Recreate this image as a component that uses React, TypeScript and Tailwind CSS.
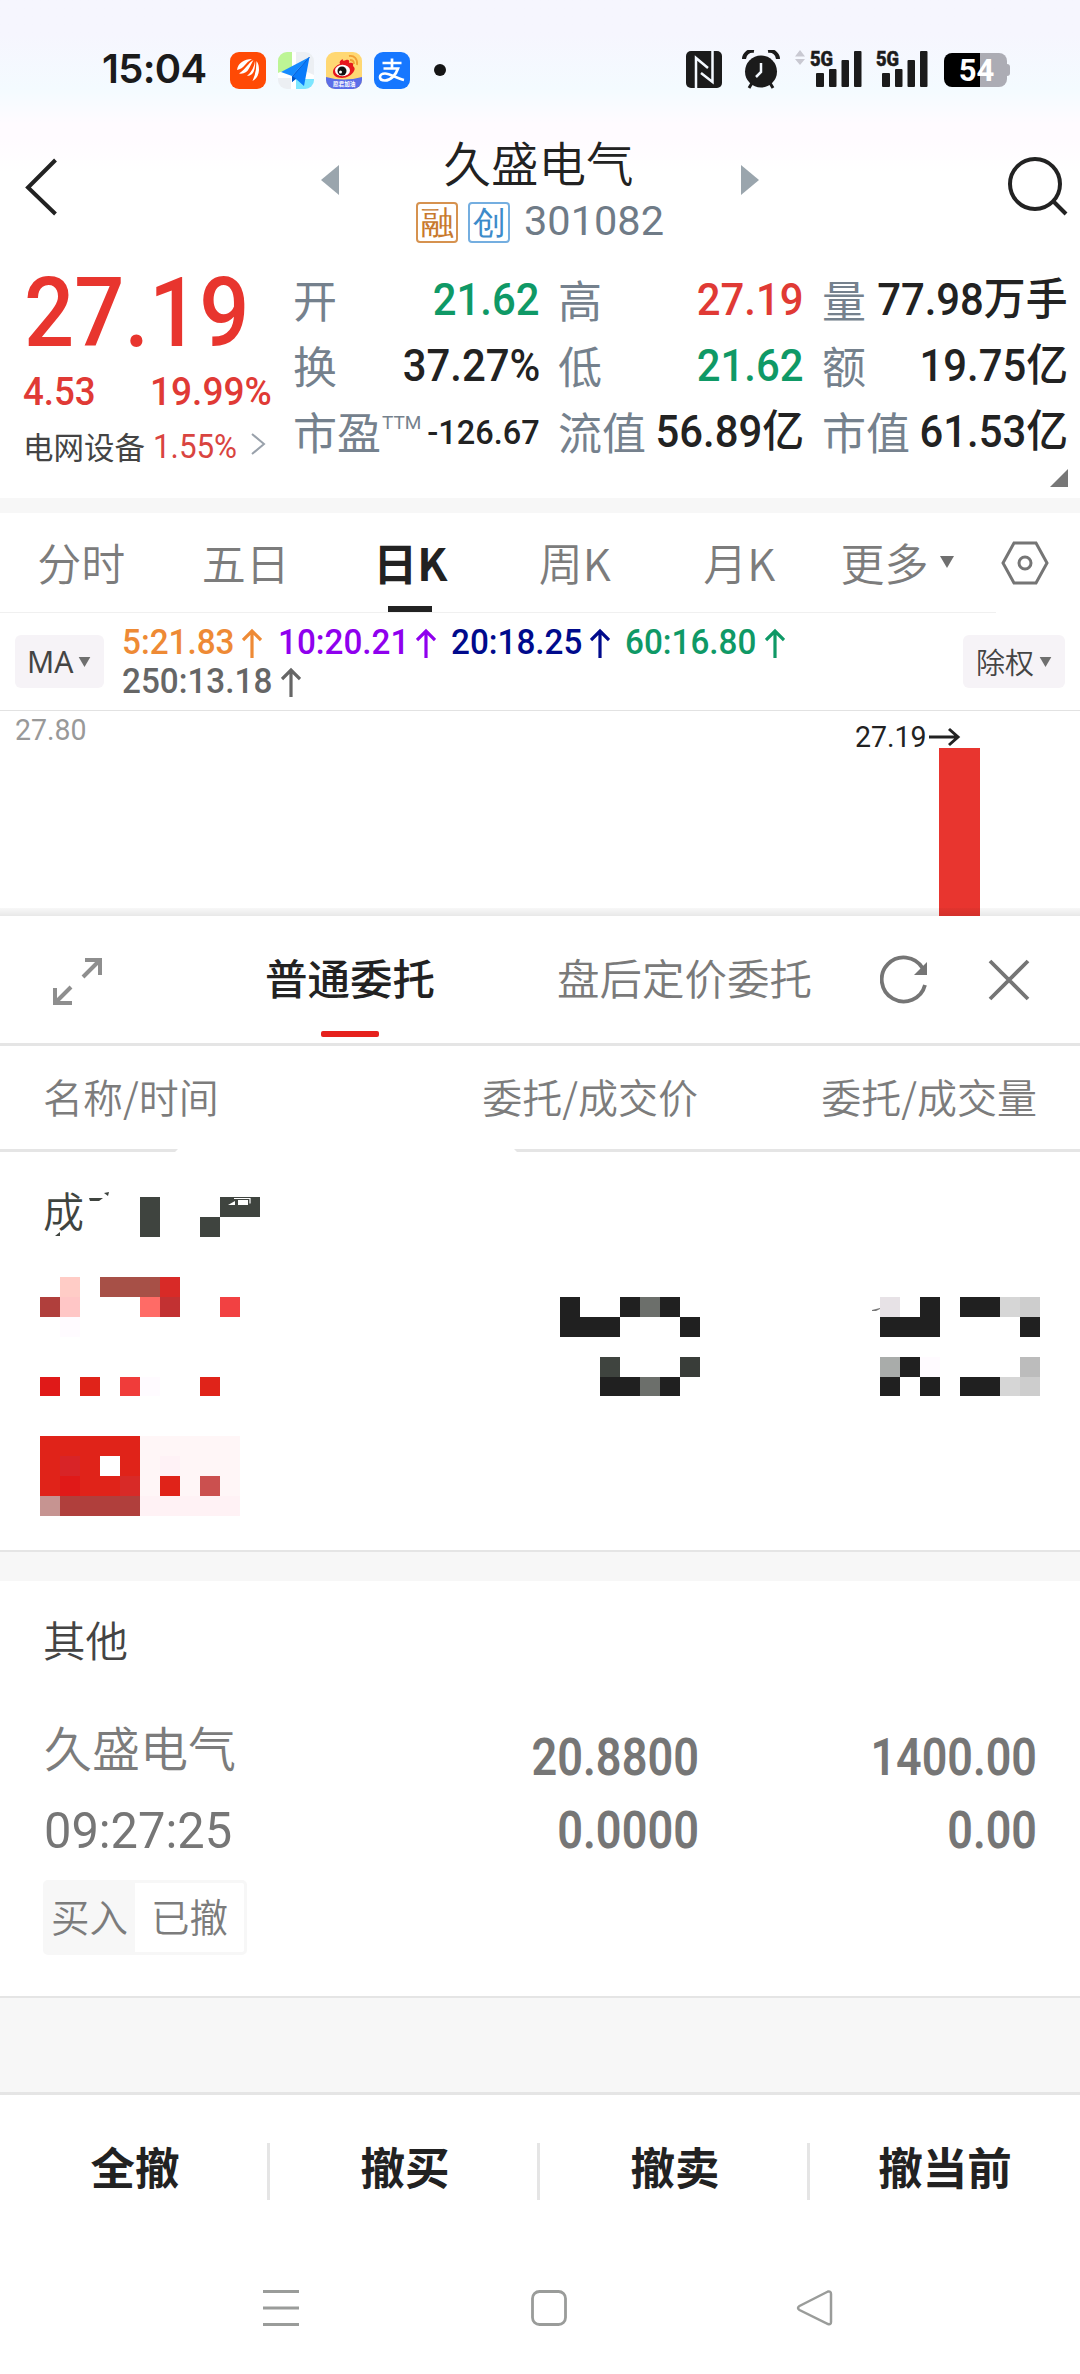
import React from "react";

const CJK = "font-['Noto_Sans_CJK_SC',sans-serif]";
const NUM = "font-[Roboto,'Noto_Sans_CJK_SC',sans-serif]";

type Cell = [number, number, number, number, string];

/* ---------- status bar ---------- */

function Signal() {
  return (
    <svg width="52" height="46" viewBox="0 -8 52 46" className="-mt-[8px] shrink-0 overflow-visible">
      <text x="0" y="16" fontFamily="Roboto, sans-serif" fontWeight="800" fontSize="21" textLength="23" lengthAdjust="spacingAndGlyphs" fill="#1b1b1b" stroke="#1b1b1b" strokeWidth="0.600">5G</text>
      <g fill="#1b1b1b">
        <rect x="6" y="23" width="8" height="14" rx="1" />
        <rect x="19" y="19" width="7.500" height="18" rx="1" />
        <rect x="31.500" y="10" width="7.500" height="27" rx="1" />
        <rect x="44" y="1" width="7.500" height="36" rx="1" />
      </g>
    </svg>
  );
}

function StatusBar() {
  return (
    <div className="flex h-[138px] items-start bg-linear-to-b from-[#f6f6fe] from-25% via-[#f4fbff] via-65% to-[#fffbff] to-90% pt-[50px] pl-[102px]">
      <div className="flex h-[38px] w-[128px] items-center font-[Inter,sans-serif] text-[40px] leading-none font-semibold tracking-[-0.7px] text-[#1b1b1b]">15:04</div>
      <div className="mt-[2px] flex h-[37px] items-center gap-[12px]">
        <svg width="36" height="37" viewBox="0 0 36 37">
          <rect width="36" height="37" rx="9" fill="#ff4a05" />
          <g fill="#fff">
            <path d="M22 7C14 7 8 11 7 18q5-1 8-5 2-3 7-6z" />
            <path d="M23.500 8C18 11 17 16 9 21.500q7 1 10-5 2-4 4.500-8.500z" />
            <path d="M25 9q-1 9-8 15 6 0 7.500-7 1-4 .5-8z" />
            <path d="M26.500 9q0 12-4 20 6-3 6.500-11Q29 12 26.500 9z" />
          </g>
        </svg>
        <svg width="36" height="37" viewBox="0 0 36 37">
          <clipPath id="map"><rect width="36" height="37" rx="9" /></clipPath>
          <g clipPath="url(#map)">
            <rect width="36" height="37" fill="#eceff3" />
            <path d="M0 0h14v17L0 21z" fill="#bdf595" />
            <path d="M14 0h4v15l18 8v4H18v10h-5V26L0 26v-5l14-5z" fill="#fff" />
            <path d="M18 27h18v10H18z" fill="#7ce6ff" />
          </g>
          <path d="M31.500 5 3 20l11 4z" fill="#168bff" />
          <path d="M31.500 5 14 24v6l4-3 8 7z" fill="#0a7bfa" />
          <path d="M14 24v6l4-3.500z" fill="#0555c5" />
          <path d="M31.500 5 14 25" stroke="#075fd6" strokeWidth="1" />
        </svg>
        <svg width="36" height="37" viewBox="0 0 36 37">
          <clipPath id="wb"><rect width="36" height="37" rx="9" /></clipPath>
          <g clipPath="url(#wb)">
            <rect width="36" height="37" fill="#ffd873" />
            <path d="M0 25q18 5 36 0v12H0z" fill="#5b6ee8" />
          </g>
          <path d="M14 12c-1-2 0-4 3-5-1 2 1 2 3 1 2-1 4 0 3 3 3-1 5 0 4 3 2 2 2 3 1 5-2 4-7 7-12 7-6 0-9-3-9-6 0-4 4-7 7-8z" fill="#e6161d" />
          <ellipse cx="16.500" cy="18.500" rx="7.500" ry="5.800" fill="#fff" />
          <circle cx="16" cy="19" r="4.500" fill="#111" />
          <circle cx="14.500" cy="20" r="1.500" fill="#fff" />
          <path d="M23 4c5-1 9 3 8 9M24 8c3 0 4 1 4 4" stroke="#f2a035" strokeWidth="1.800" fill="none" />
          <text x="7" y="34" fontFamily="'Noto Sans CJK SC', sans-serif" fontWeight="700" fontSize="5.600" fill="#fff">愿君加油</text>
        </svg>
        <svg width="36" height="37" viewBox="0 0 36 37">
          <rect width="36" height="37" rx="9" fill="#1677ff" />
          <path d="M8.500 11h19M18 6.500v9M9.500 16.500h14.500c-2 6-7 12-13 12-3.500 0-5-1.500-5-3.500s2-3.500 5-3.500c5 0 12 5 19 6.500" stroke="#fff" strokeWidth="2.700" fill="none" />
        </svg>
      </div>
      <div className="mt-[14px] ml-[24px] size-[12px] rounded-full bg-[#151515]" />
      <div className="ml-[240px] flex items-start">
        <svg width="36" height="37" viewBox="0 0 36 37" className="mt-px">
          <rect width="36" height="37" rx="5" fill="#1b1b1b" />
          <path d="M10 37V7l12 10M26.500 0v31L15 22" stroke="#f4f9ff" strokeWidth="2.500" fill="none" />
        </svg>
        <svg width="38" height="39" viewBox="0 0 38 39" className="ml-[20px]">
          <circle cx="19" cy="21.500" r="16" fill="#1b1b1b" />
          <path d="M2 9C2 4 7 0 12 1M36 9C36 4 31 0 26 1" stroke="#1b1b1b" strokeWidth="4" fill="none" />
          <path d="m10 33-3 5M28 33l3 5" stroke="#1b1b1b" strokeWidth="3" />
          <path d="M19 13v9l-5 5" stroke="#f4f9ff" strokeWidth="2.500" fill="none" />
        </svg>
        <svg width="10" height="16" viewBox="0 0 10 16" className="ml-[15px]">
          <path d="m5 0 5 6.500H0zM0 9h10l-5 6z" fill="#c9c9d2" />
        </svg>
        <div className="ml-[5px] flex gap-[14px]">
          <Signal />
          <Signal />
        </div>
        <div className="mt-[3px] ml-[16px] flex items-center">
          <div className="flex h-[34px] w-[63px] items-center justify-center rounded-[8px] bg-linear-to-r from-black from-57% to-[#acacb4] to-57% pl-[2px] font-[Roboto,sans-serif] text-[31px] leading-none font-bold text-white">54</div>
          <div className="h-[12px] w-[3px] rounded-r-[3px] bg-[#acacb4]" />
        </div>
      </div>
    </div>
  );
}

/* ---------- stock header ---------- */

function Badge({ text, className }: { text: string; className: string }) {
  return (
    <span className={`flex h-[41px] w-[42px] items-center justify-center rounded-[4px] border-2 text-[33px] leading-none ${className}`}>
      <span className="-mt-[3px]">{text}</span>
    </span>
  );
}

function TitleBar() {
  return (
    <div className="flex h-[114px] items-start bg-linear-to-b from-[#fffbff] to-white to-30% pl-[25px]">
      <svg width="34" height="60" viewBox="0 0 34 60" className="mt-[19px]">
        <path d="M30.500 3 3 30.500 30.500 57" stroke="#222" strokeWidth="4" fill="none" />
      </svg>
      <div className="ml-[262px] flex w-[438px] justify-between">
        <svg width="18" height="30" viewBox="0 0 18 30" className="mt-[27px]"><path d="M18 0v30L0 15z" fill="#9aa5ad" /></svg>
        <div className="flex flex-col items-center">
          <div className={`${CJK} mt-[1px] mr-[3px] h-[50px] text-[47.500px] leading-[46px] font-[350] text-[#222]`}>久盛电气</div>
          <div className="mt-[13px] flex h-[41px] items-center">
            <Badge text="融" className="border-[#d6924f] text-[#c8792c]" />
            <Badge text="创" className="ml-[10px] border-[#74aee0] text-[#3d8bca]" />
            <span className={`${NUM} -mt-[4px] ml-[14px] text-[41.500px] leading-none text-[#6f7b87]`}>301082</span>
          </div>
        </div>
        <svg width="18" height="30" viewBox="0 0 18 30" className="mt-[27px]"><path d="M0 0v30l18-15z" fill="#9aa5ad" /></svg>
      </div>
      <svg width="62" height="62" viewBox="0 0 62 62" className="mt-[17px] ml-[247px]">
        <circle cx="29" cy="29" r="25" stroke="#222" strokeWidth="4" fill="none" />
        <path d="m47 46 13 13" stroke="#222" strokeWidth="4" />
      </svg>
    </div>
  );
}

function Stat({ label, sup, value, color = "text-[#222]", small = false }: { label: string; sup?: string; value: string; color?: string; small?: boolean }) {
  return (
    <div className="flex h-[66px] items-center justify-between whitespace-nowrap">
      <span className={`${CJK} -mt-[13px] -ml-px flex text-[44px] leading-[60px] text-[#75818d]`}>
        {label}
        {sup && <span className="mt-[7px] ml-[1px] font-[Roboto] text-[19px] leading-[30px]">{sup}</span>}
      </span>
      <span className={`${NUM} -mt-[10px] mr-[-1px] w-0 [direction:rtl]`}>
        <span className={`inline-block origin-right font-medium [direction:ltr] ${small ? "scale-x-[0.955] text-[34px]" : "scale-x-[0.94] text-[44.500px]"} leading-[60px] ${color}`}>{value}</span>
      </span>
    </div>
  );
}

function Quote() {
  return (
    <div className="flex h-[246px] pt-[20px] pr-[12px] pl-[24px]">
      <div className={`${NUM} w-[270px] whitespace-nowrap`}>
        <div className="h-[94px] origin-left scale-x-[0.92] text-[96px] leading-[83px] font-medium text-[#e8352e]">27.19</div>
        <div className="flex h-[50px] text-[39px] leading-[52px] font-medium text-[#e03a35]">
          <span className="-ml-px w-[127px] origin-left scale-x-[0.94]">4.53</span>
          <span className="origin-left scale-x-[0.95]">19.99%</span>
        </div>
        <div className="flex h-[60px] items-center">
          <span className={`${CJK} -ml-px w-[130px] text-[30.500px] leading-none text-[#444]`}>电网设备</span>
          <span className="w-[98px] origin-left scale-x-[0.95] text-[33px] leading-none text-[#d94440]">1.55%</span>
          <svg width="15" height="22" viewBox="0 0 15 22" className="-mt-[4px]"><path d="m1 1 12 10L1 21" stroke="#99a1ab" strokeWidth="2" fill="none" /></svg>
        </div>
      </div>
      <div className="flex flex-1 flex-col">
        <div className="grid grid-cols-[245px_244px_244px] gap-x-[20px]">
          <Stat label="开" value="21.62" color="text-[#0f9966]" />
          <Stat label="高" value="27.19" color="text-[#e03a35]" />
          <Stat label="量" value="77.98万手" />
          <Stat label="换" value="37.27%" />
          <Stat label="低" value="21.62" color="text-[#0f9966]" />
          <Stat label="额" value="19.75亿" />
          <Stat label="市盈" sup="TTM" value="-126.67" small />
          <Stat label="流值" value="56.89亿" />
          <Stat label="市值" value="61.53亿" />
        </div>
        <svg width="18" height="18" viewBox="0 0 18 18" className="-mt-px mr-0 ml-auto"><path d="M18 0v18H0z" fill="#777" /></svg>
      </div>
    </div>
  );
}

/* ---------- chart ---------- */

function Caret({ className }: { className: string }) {
  return <svg width="14" height="12" viewBox="0 0 14 12" className={className}><path d="M0 0h14L7 12z" fill="#6f6f6f" /></svg>;
}

function ChartTabs() {
  const tabs = ["分时", "五日", "日K", "周K", "月K"];
  return (
    <div className={`${CJK} -ml-px flex h-[99px] text-[44px] leading-[98px] font-[350] text-[#7c7c7c]`}>
      {tabs.map((t) => (
        <div key={t} className="flex w-[164.500px] flex-col items-center">
          {t === "日K" ? (
            <>
              <span className="h-[93px] font-bold text-[#222]">{t}</span>
              <span className="h-[6px] w-[44px] bg-[#222]" />
            </>
          ) : (
            <span>{t}</span>
          )}
        </div>
      ))}
      <span className="ml-[19px]">更多</span>
      <Caret className="mt-[43px] ml-[11px]" />
      <svg width="48" height="44" viewBox="0 0 48 44" className="mt-[28px] ml-[47px]">
        <path d="M13 2h22l11 20-11 20H13L2 22z" stroke="#757575" strokeWidth="3" fill="none" />
        <circle cx="24" cy="22" r="6" stroke="#757575" strokeWidth="3" fill="none" />
      </svg>
    </div>
  );
}

function UpArrow() {
  return (
    <svg width="20" height="30" viewBox="0 0 20 30" className="shrink-0">
      <path d="M10 30V3M1 12l9-9 9 9" stroke="currentColor" strokeWidth="3.200" fill="none" />
    </svg>
  );
}

function Ma({ text, className, textClass }: { text: string; className: string; textClass: string }) {
  return (
    <div className={`flex h-[39px] items-center ${className}`}>
      <span className={`origin-left scale-x-[0.95] ${textClass}`}>{text}</span>
      <UpArrow />
    </div>
  );
}

function MaBar() {
  const pill = "flex h-[53px] items-center rounded-[6px] bg-[#f6f3f7] text-[#444]";
  return (
    <>
      <div className="h-px w-[996px] bg-[#f0f0f0]" />
      <div className="flex h-[97px] pt-[22px] pr-[15px] pl-[15px]">
        <div className={`${pill} w-[89px] pl-[12px] font-['Noto_Sans',sans-serif] text-[30px]`}>
          <span className="w-[51px]">MA</span>
          <Caret className="h-[10px] w-[13px]" />
        </div>
        <div className={`${NUM} -mt-[12px] ml-[18px] flex w-[800px] flex-wrap content-start text-[35px] leading-[39px] font-medium whitespace-nowrap`}>
          <Ma text="5:21.83" className="w-[156px] text-[#ee8a35]" textClass="w-[120px]" />
          <Ma text="10:20.21" className="w-[173px] text-[#8f00ee]" textClass="w-[138px]" />
          <Ma text="20:18.25" className="w-[174px] text-[#000a8c]" textClass="w-[139px]" />
          <Ma text="60:16.80" className="w-[200px] text-[#0f9966]" textClass="w-[140px]" />
          <Ma text="250:13.18" className="w-[200px] text-[#666]" textClass="w-[159px]" />
        </div>
        <div className={`${pill} ${CJK} ml-auto w-[102px] pl-[13px] text-[29px] leading-none font-[350]`}>
          <span className="-mt-px w-[63px]">除权</span>
          <Caret className="h-[10px] w-[13px]" />
        </div>
      </div>
      <div className="h-px bg-[#e2e2e2]" />
    </>
  );
}

function Chart() {
  return (
    <div className={`${NUM} relative flex h-[205px] justify-between pl-[15px] text-[30px]`}>
      <span className="origin-left scale-x-[0.95] self-start leading-[38px] text-[#999]">27.80</span>
      <div className="flex w-[224px] flex-col">
        <div className="flex h-[37px] items-center pt-[14px]">
          <span className="-ml-px w-[74px] origin-left scale-x-[0.95] leading-none text-[#222]">27.19</span>
          <svg width="32" height="20" viewBox="0 0 32 20"><path d="M0 10h28M20 2l9 8-9 8" stroke="#222" strokeWidth="3" fill="none" /></svg>
        </div>
        <div className="ml-[83px] w-[41px] flex-1 bg-[#e8352f]" />
      </div>
      <div className="absolute inset-x-0 bottom-0 h-[8px] bg-linear-to-b from-black/3 to-black/9" />
    </div>
  );
}

/* ---------- order panel ---------- */

function PanelTabs() {
  return (
    <div className={`${CJK} flex h-[127px] text-[42.500px] leading-[122px] text-[#7a7a7a]`}>
      <svg width="52" height="50" viewBox="0 0 52 50" className="mt-[41px] ml-[52px]">
        <path d="M33 3h15v15M48 3 31 20M19 30 3 46M3 31v15h17" stroke="#8e8e8e" strokeWidth="4" fill="none" />
      </svg>
      <div className="ml-[161px] flex w-[170px] flex-col items-center">
        <span className="h-[115px] font-medium text-[#222]">普通委托</span>
        <span className="h-[6px] w-[58px] rounded-[2px] bg-[#e6211d]" />
      </div>
      <span className="ml-[122px] w-[256px] font-[350]">盘后定价委托</span>
      <svg width="50" height="50" viewBox="0 0 50 50" className="mt-[39px] ml-[67px]">
        <path d="M45 30A22 22 0 1 1 42.500 13" stroke="#757575" strokeWidth="3.800" fill="none" />
        <path d="M47 7v13H34z" fill="#757575" />
      </svg>
      <svg width="42" height="42" viewBox="0 0 42 42" className="mt-[43px] ml-[58px]">
        <path d="m2 2 38 38M40 2 2 40" stroke="#757575" strokeWidth="3.800" />
      </svg>
    </div>
  );
}

const mosaic: Cell[] = [
  [140, 45, 20, 40, "#3f443f"], [220, 45, 40, 20, "#3f443f"], [200, 65, 20, 20, "#3f443f"],
  [60, 125, 20, 20, "#ffccc6"], [100, 125, 60, 20, "#a75047"], [160, 125, 20, 20, "#d82a27"],
  [40, 145, 20, 20, "#b03f3c"], [60, 145, 20, 20, "#ffc6c6"], [140, 145, 20, 20, "#ff6b66"],
  [160, 145, 20, 20, "#c23132"], [220, 145, 20, 20, "#f24142"], [60, 165, 20, 20, "#fffbff"],
  [40, 225, 20, 19, "#e01918"], [80, 225, 20, 19, "#e02319"], [120, 225, 20, 19, "#f03c3a"],
  [140, 225, 20, 19, "#fffbff"], [200, 225, 20, 19, "#e02319"],
  [40, 284, 100, 80, "#e02319"], [60, 304, 20, 20, "#d82427"], [60, 324, 20, 20, "#e01918"],
  [100, 304, 20, 20, "#ffffff"], [120, 324, 20, 20, "#d82a27"], [40, 344, 20, 20, "#c69491"],
  [60, 344, 80, 20, "#b03f3c"], [140, 284, 100, 60, "#fff6f7"], [160, 304, 20, 20, "#fff2f6"],
  [140, 344, 100, 20, "#fff2f5"], [160, 324, 20, 20, "#e02319"], [200, 324, 20, 20, "#cb504f"],
  [560, 145, 20, 40, "#202020"], [580, 165, 40, 20, "#202020"], [620, 145, 20, 20, "#202020"],
  [640, 145, 20, 20, "#6c6f6b"], [660, 145, 20, 20, "#202020"], [680, 165, 20, 20, "#202020"],
  [600, 205, 20, 20, "#3f443f"], [680, 205, 20, 20, "#393d39"], [600, 225, 40, 19, "#202020"],
  [640, 225, 20, 19, "#6c6f6b"], [660, 225, 20, 19, "#202020"],
  [880, 145, 20, 20, "#e7e2e6"], [920, 145, 20, 20, "#202020"], [960, 145, 40, 20, "#202020"],
  [1000, 145, 20, 20, "#d6d6d6"], [1020, 145, 20, 20, "#cdcdcd"], [880, 165, 60, 20, "#202020"],
  [1020, 165, 20, 20, "#202020"], [880, 205, 20, 20, "#a9acaa"], [900, 205, 20, 20, "#202020"],
  [920, 205, 20, 20, "#fffbff"], [1020, 205, 20, 20, "#bcbcbc"], [880, 225, 20, 19, "#202020"],
  [920, 225, 20, 19, "#202020"], [960, 225, 40, 19, "#202020"], [1000, 225, 20, 19, "#d6d6d6"],
  [1020, 225, 20, 19, "#cdcdcd"],
];

function MaskedOrder() {
  return (
    <div className="grid h-[398px]">
      <div className={`${CJK} col-start-1 row-start-1 pt-[27px] pl-[43px] text-[41px] leading-[60px] font-[350] text-[#3f443f]`}>成</div>
      <svg width="1080" height="398" viewBox="0 0 1080 398" shapeRendering="crispEdges" className="col-start-1 row-start-1">
        {mosaic.map(([x, y, w, h, fill], i) => (
          <rect key={i} x={x} y={y} width={w} height={h} fill={fill} />
        ))}
        <g shapeRendering="geometricPrecision">
          <path d="M89 46h14l-4 3H90zM104 41l5-1-1 4zM55 84l5-4v4z" fill="#3f443f" />
          <path d="M228 53l7-4v4zM238 48h10v5h-10z" fill="#fff" />
          <path d="M234 46.500h16v5" stroke="#fff" strokeWidth="1.200" fill="none" />
          <path d="M872 158l4-1 4-1v1l-4 2h-4z" fill="#777" />
        </g>
      </svg>
    </div>
  );
}

function Orders() {
  return (
    <div>
      <div className="h-[3px] bg-[#e5e5e5]" />
      <div className={`${CJK} flex h-[103px] pr-[43px] pl-[43px] text-[40px] leading-[100px] font-[350] text-[#7c7c7c]`}>
        <span className="w-[300px]">名称/时间</span>
        <span className="w-[355px] text-right">委托/成交价</span>
        <span className="flex-1 text-right">委托/成交量</span>
      </div>
      <svg width="1080" height="3" viewBox="0 0 1080 3"><path d="M0 0h178l-3 3H0zM514 0h566v3H517z" fill="#e5e5e5" /></svg>
      <MaskedOrder />
      <div className="h-[2px] bg-[#e5e5e5]" />
      <div className="h-[29px] bg-[#f7f7f7]" />
      <div className="flex h-[415px] flex-col pr-[43px] pl-[44px] text-[#767676]">
        <div className={`${CJK} -ml-px h-[130px] pt-[29px] text-[42.500px] leading-[58px] font-[350] text-[#444]`}>其他</div>
        <div className="flex h-[169px] justify-between">
          <div className="w-[270px]">
            <div className={`${CJK} h-[79px] text-[48px] leading-[71px] font-[350] text-[#7c7c7c]`}>久盛电气</div>
            <div className={`${NUM} origin-left scale-x-[0.985] text-[49.500px] leading-[82px]`}>09:27:25</div>
          </div>
          <div className={`${NUM} w-[385px] text-right text-[51px] leading-[73px] font-semibold`}>
            <div className="mt-[10px] origin-right scale-x-[0.885]">20.8800</div>
            <div className="origin-right scale-x-[0.885]">0.0000</div>
          </div>
          <div className={`${NUM} flex-1 text-right text-[51px] leading-[73px] font-semibold`}>
            <div className="mt-[10px] origin-right scale-x-[0.88]">1400.00</div>
            <div className="origin-right scale-x-[0.88]">0.00</div>
          </div>
        </div>
        <div className={`${CJK} -ml-px flex h-[75px] w-[204px] rounded-[5px] border-3 border-[#f7f7f7] text-[38.500px] leading-[65px] font-[350] text-[#7c7c7c]`}>
          <span className="w-[89px] bg-[#f7f7f7] pl-[5px]">买入</span>
          <span className="pl-[16px]">已撤</span>
        </div>
      </div>
      <div className="h-[2px] bg-[#e5e5e5]" />
      <div className="h-[94px] bg-[#f7f7f7]" />
      <div className="h-[3px] bg-[#e5e5e5]" />
    </div>
  );
}

function BottomActions() {
  const actions = ["全撤", "撤买", "撤卖", "撤当前"];
  return (
    <div className={`${CJK} flex h-[165px] pt-[48px] text-[44.500px] leading-[46px] font-bold text-[#222]`}>
      {actions.map((a, i) => (
        <div key={a} className={`h-[57px] w-[270px] border-[#e5e5e5] text-center ${i < 3 ? "border-r-3 pl-[3px]" : ""}`}>{a}</div>
      ))}
    </div>
  );
}

function SystemNav() {
  return (
    <div className="flex pt-[28px] pl-[263px]">
      <svg width="36" height="40" viewBox="0 0 36 40"><path d="M0 3.500h36M0 20h36M0 36.500h36" stroke="#9a9c9a" strokeWidth="3" /></svg>
      <svg width="38" height="40" viewBox="0 0 38 40" className="ml-[231px]"><rect x="2.500" y="3.500" width="33" height="33" rx="7" stroke="#9a9c9a" strokeWidth="2.800" fill="none" /></svg>
      <svg width="38" height="40" viewBox="0 0 38 40" className="ml-[228px]"><path d="M32 3.500 3.500 18q-3 2 0 4L32 36q3 1 3-2V6q0-3-3-2.500z" stroke="#9a9c9a" strokeWidth="2.500" fill="none" /></svg>
    </div>
  );
}

export default function App() {
  return (
    <div className="h-[2374px] w-[1080px] overflow-hidden bg-white">
      <StatusBar />
      <TitleBar />
      <Quote />
      <div className="h-[15px] bg-[#f7f7f7]" />
      <ChartTabs />
      <MaBar />
      <Chart />
      <PanelTabs />
      <Orders />
      <BottomActions />
      <SystemNav />
    </div>
  );
}
